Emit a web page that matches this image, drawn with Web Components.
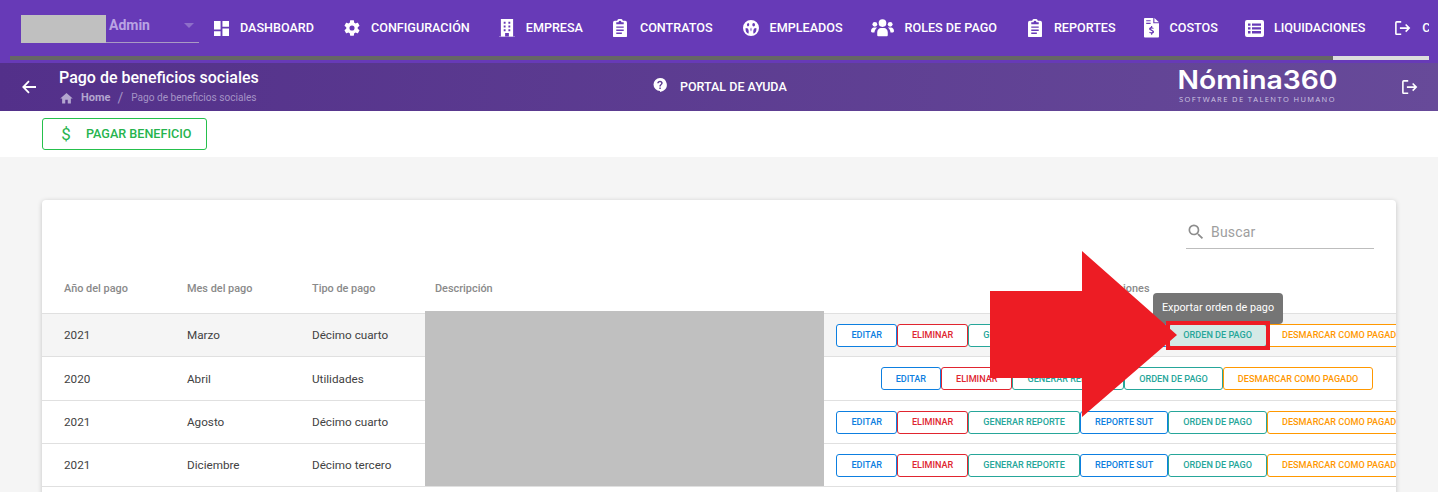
<!DOCTYPE html>
<html lang="es">
<head>
<meta charset="utf-8">
<title>Pago de beneficios sociales</title>
<style>
html,body{margin:0;padding:0;height:492px;overflow:hidden;background:#f5f5f5;font-family:Roboto,"Liberation Sans",sans-serif;}
</style>
</head>
<body>
<app-shell>
  <top-nav>
    <nav-item icon="dashboard" w="16" s="15">DASHBOARD</nav-item>
    <nav-item icon="cog" w="18" s="16" x="1">CONFIGURACIÓN</nav-item>
    <nav-item icon="building" w="17" s="16">EMPRESA</nav-item>
    <nav-item icon="clipboard" w="18" s="14" x="1">CONTRATOS</nav-item>
    <nav-item icon="face" w="18" s="16" x="1" m="28">EMPLEADOS</nav-item>
    <nav-item icon="users" w="24" s="23">ROLES DE PAGO</nav-item>
    <nav-item icon="clipboard" w="18" s="14" x="2" m="27">REPORTES</nav-item>
    <nav-item icon="invoice" w="17" s="15" x="1" m="27">COSTOS</nav-item>
    <nav-item icon="list" w="19" s="19">LIQUIDACIONES</nav-item>
    <nav-item icon="exit" w="18" s="16" x="1">CERRAR SESIÓN</nav-item>
  </top-nav>
  <sub-header heading="Pago de beneficios sociales"></sub-header>
  <action-bar></action-bar>
  <pay-card>
    <pay-row year="2021" month="Marzo" type="Décimo cuarto" sut hover></pay-row>
    <pay-row year="2020" month="Abril" type="Utilidades" h="44"></pay-row>
    <pay-row year="2021" month="Agosto" type="Décimo cuarto" sut></pay-row>
    <pay-row year="2021" month="Diciembre" type="Décimo tercero" sut></pay-row>
  </pay-card>
</app-shell>
<arrow-callout></arrow-callout>

<script>
const ICONS = {
  dashboard:'<svg viewBox="0 0 16 16" fill="#fff"><path d="M0 0h7v9H0zM0 11h7v5H0zM9 0h7v6H9zM9 8h7v8H9z"/></svg>',
  cog:'<svg viewBox="2 2 20 20" fill="#fff"><path d="M19.14 12.94c.04-.3.06-.61.06-.94 0-.32-.02-.64-.07-.94l2.03-1.58c.18-.14.23-.41.12-.61l-1.92-3.32c-.12-.22-.37-.29-.59-.22l-2.39.96c-.5-.38-1.03-.7-1.62-.94l-.36-2.54c-.04-.24-.24-.41-.48-.41h-3.84c-.24 0-.43.17-.47.41l-.36 2.54c-.59.24-1.13.57-1.62.94l-2.39-.96c-.22-.08-.47 0-.59.22L2.74 8.87c-.12.21-.08.47.12.61l2.03 1.58c-.05.3-.09.63-.09.94s.02.64.07.94l-2.03 1.58c-.18.14-.23.41-.12.61l1.92 3.32c.12.22.37.29.59.22l2.39-.96c.5.38 1.03.7 1.62.94l.36 2.54c.05.24.24.41.48.41h3.84c.24 0 .44-.17.47-.41l.36-2.54c.59-.24 1.13-.56 1.62-.94l2.39.96c.22.08.47 0 .59-.22l1.92-3.32c.12-.22.07-.47-.12-.61l-2.01-1.58zM12 15.200a3.200 3.200 0 1 1 0-6.400 3.200 3.200 0 0 1 0 6.400z"/></svg>',
  building:'<svg viewBox="0 0 17 20" fill="#fff"><path fill-rule="evenodd" d="M2 0h13v18.500h-4.500v-3.500h-4v3.500H2zM5 3v2h2V3zm5 0v2h2V3zM5 7v2h2V7zm5 0v2h2V7zM5 11v2h2v-2zm5 0v2h2v-2z"/><rect x="0" y="18.800" width="17" height="1.200"/></svg>',
  clipboard:'<svg viewBox="1.500 0 15 20" fill="#fff"><path fill-rule="evenodd" d="M3.500 2H6a3 2.200 0 0 1 6 0h2.500A2 2 0 0 1 16.500 4v14a2 2 0 0 1-2 2h-11a2 2 0 0 1-2-2V4a2 2 0 0 1 2-2zM5 3.500v2h8v-2h-2.500a1.500 1.500 0 0 0-3 0zM5 8v1.500h8V8zm0 3.300v1.500h8v-1.500zm0 3.300v1.500h6v-1.500z"/></svg>',
  face:'<svg viewBox="0 0 18 18" fill="#fff"><path fill-rule="evenodd" d="M9 0a9 9 0 1 1 0 18A9 9 0 0 1 9 0zM6 3.500a2 2 0 0 0-.6 3.700A2 2 0 0 0 6 3.500zm6 0a2 2 0 0 0 0 3.900 2 2 0 0 0 0-3.900zM3 9c-.5 3 .5 5 3 6.500.8-2 .5-4.500-.5-6zM15 9l-2.500.5c-1 1.500-1.300 4-.5 6 2.500-1.500 3.500-3.500 3-6.500zM9 8.500c-.8 1.500-.8 3 0 4.500.8-1.500.8-3 0-4.500z"/></svg>',
  users:'<svg viewBox="0 0 24 18" fill="#fff"><circle cx="12" cy="4.300" r="4"/><circle cx="4" cy="5.500" r="2.500"/><circle cx="20" cy="5.500" r="2.500"/><path d="M6.500 17v-3.200c0-2.500 2-4.300 3.800-4.300h3.400c1.800 0 3.800 1.800 3.800 4.300V17c0 .6-.4 1-1 1H7.500c-.6 0-1-.4-1-1zM0 12.500C0 10 1.500 8.800 3 8.800h2.200c.5 0 .8.200 1.100.4-1.500 1-2.500 2.700-2.700 4.800H1.200C.5 14 0 13.400 0 12.500zM24 12.500c0-2.500-1.500-3.700-3-3.700h-2.200c-.5 0-.8.200-1.100.4 1.500 1 2.500 2.700 2.700 4.800h2.400c.7 0 1.200-.6 1.200-1.500z"/></svg>',
  invoice:'<svg viewBox="0 0 17 22" fill="#fff"><path fill-rule="evenodd" d="M1 0h9.500v6H17v15a1 1 0 0 1-1 1H1a1 1 0 0 1-1-1V1a1 1 0 0 1 1-1zM2.500 2.500v1.300h5V2.500zm0 3v1.300h5V5.500zM11.800 0 17 4.800h-5.200zM8 9v1.200c-1.300.2-2.200 1-2.200 2.100 0 1.300 1 1.700 2.200 2.100 1.100.3 1.500.5 1.500 1 0 .4-.4.7-1.100.7-.6 0-1.200-.2-1.800-.6l-.7 1.100c.6.400 1.300.7 2.100.8V19h1.300v-1.200c1.300-.2 2.100-1 2.100-2.100 0-1.300-1-1.800-2.200-2.200-1.100-.3-1.500-.5-1.500-.9s.4-.6 1-.6c.5 0 1.100.2 1.600.5l.7-1.100c-.5-.300-1.100-.6-1.700-.7V9z"/></svg>',
  list:'<svg viewBox="0 0 19 17" fill="#fff"><path fill-rule="evenodd" d="M2 0h15a2 2 0 0 1 2 2v13a2 2 0 0 1-2 2H2a2 2 0 0 1-2-2V2a2 2 0 0 1 2-2zM3 3.500v2.300h2.500V3.500zm4 0v2.300h9V3.500zM3 7.300v2.300h2.500V7.300zm4 0v2.300h9V7.300zM3 11.100v2.300h2.500v-2.300zm4 0v2.300h9v-2.300z"/></svg>',
  exit:'<svg viewBox="0 0 18 16" fill="none" stroke="#fff" stroke-width="1.800"><path d="M7 1H2a1 1 0 0 0-1 1v12a1 1 0 0 0 1 1h5"/><path d="M5.500 8H16M12 4l4 4-4 4"/></svg>'
};

function define(name, css, html){
  customElements.define(name, class extends HTMLElement{
    connectedCallback(){
      if(this.shadowRoot) return;
      const r=this.attachShadow({mode:'open'});
      r.innerHTML='<style>'+css+'</style>'+(typeof html==='function'?html(this):html);
    }
  });
}

define('app-shell',':host{display:block;width:1438px;height:492px;overflow:hidden}','<slot></slot>');

define('nav-item',`
:host{display:flex;align-items:center;flex:none;margin-right:29px;color:#fff;font:500 12.600px/16px Roboto,sans-serif;white-space:nowrap}
.i{display:block;margin-right:10px;flex:none}
svg{display:block}
`,el=>{
  if(el.hasAttribute('m')) el.style.marginRight=el.getAttribute('m')+'px';
  return `<span class="i" style="width:${el.getAttribute('w')}px"><span style="display:block;width:${el.getAttribute('s')}px;margin-left:${el.getAttribute('x')||0}px">${ICONS[el.getAttribute('icon')]}</span></span><slot></slot>`;
});

define('top-nav',`
:host{display:block;height:63px;background:#673ab7;padding:0 9px 0 10px;box-sizing:border-box;width:1438px}
.row{height:56px;display:flex;align-items:center;overflow:hidden;width:1419px}
.sel{flex:none;margin-left:11px;margin-right:15px;width:178px;height:28px;margin-top:2px;box-sizing:border-box;border-bottom:1px solid #a99ac4;position:relative;display:flex}
.pic{width:85px;height:28px;background:#c0c0c0;flex:none}
.adm{margin-left:3px;font:700 14px/20px Roboto,sans-serif;color:#b9a3e3;}
.car{position:absolute;right:5px;top:8px;width:0;height:0;border:5px solid transparent;border-top-color:#8e6fc9;}
.bar{height:4px;display:flex;background:#666}
.bar i{display:block;flex:none;margin-left:1323px;width:96px;background:#ddd}
`,`<div class="row"><div class="sel"><div class="pic"></div><span class="adm">Admin</span><span class="car"></span></div><slot></slot></div><div class="bar"><i></i></div>`);

define('sub-header',`
:host{display:flex;align-items:center;height:48px;background:linear-gradient(95deg,#53308a,#674a99);color:#fff;position:relative}
.back{flex:none;margin-left:22px;width:14px;height:14px;margin-right:23px}
.t{flex:none;width:594px}
h1{margin:-2px 0 0;font:500 16px/22px Roboto,sans-serif;white-space:nowrap}
.crumb{display:flex;align-items:center;font:400 10.100px/14px Roboto,sans-serif;color:#a593c6;margin-top:2px;white-space:nowrap}
.crumb svg{width:15px;height:15px;margin-right:7px;flex:none}
.crumb b{font:700 11px/14px Roboto,sans-serif;color:#b3a6cf;}
.crumb span{margin:0 8px 0 7px;font-size:14px}
.help{display:flex;align-items:center;flex:none;font:500 12.500px/16px Roboto,sans-serif;white-space:nowrap;width:524px;margin-top:-1px}
.help svg{width:14px;height:14px;margin-right:13px;margin-top:-4px}
.logo{flex:none;width:161px;text-align:center;white-space:nowrap;margin-top:-3px}
.n{font:600 25.500px/24px Inter,sans-serif;display:block;transform:scaleX(1.11)}
.s{font:400 7.500px/9px "Open Sans",sans-serif;letter-spacing:1.400px;color:#cfc6e2;display:block;margin-top:3px}
.out{flex:none;width:16px;height:15px;margin-left:64px}
.out svg{display:block}
`,el=>`<svg class="back" viewBox="0 0 14 14" fill="none" stroke="#fff" stroke-width="1.800"><path d="M14 7H1.500M7 1.200 1.300 7 7 12.800"/></svg>
<div class="t"><h1>${el.getAttribute('heading')}</h1>
<div class="crumb"><svg viewBox="0 0 24 24" fill="#b3a6cf"><path d="M10 20v-6h4v6h5v-8h3L12 3 2 12h3v8z"/></svg><b>Home</b><span>/</span>${el.getAttribute('heading')}</div></div>
<div class="help"><svg viewBox="0 0 14 14"><path fill="#fff" fill-rule="evenodd" d="M7 0a6.800 6.800 0 0 1 3 12.900L7 14v-1A6.500 6.500 0 0 1 7 0zm-.7 9.500v1.600h1.500V9.500zM7 2.800c-1.600 0-2.700 1-2.800 2.500h1.500c.1-.7.600-1.100 1.300-1.100s1.200.4 1.200 1c0 1.200-1.900 1.300-1.900 3.300h1.500c0-1.400 1.900-1.600 1.900-3.400C9.700 3.800 8.600 2.800 7 2.800z"/></svg>PORTAL DE AYUDA</div>
<div class="logo"><span class="n">Nómina360</span><span class="s">SOFTWARE DE TALENTO HUMANO</span></div>
<div class="out">${ICONS.exit}</div>`);

define('action-bar',`
:host{display:block;height:46px;background:#fff;padding:7px 0 0 42px;box-sizing:border-box}
.b{display:flex;align-items:center;width:165px;height:32px;box-sizing:border-box;border:1px solid #25c04c;border-radius:3px;color:#26b44e;font:500 12.600px/16px Roboto,sans-serif;white-space:nowrap}
.d{font:400 17px/20px Roboto,sans-serif;width:10px;margin:0 15px 0 18px;text-align:center;flex:none}
`,`<div class="b"><span class="d">$</span>PAGAR BENEFICIO</div>`);

define('pay-card',`
:host{display:block;position:relative;margin:43px 0 0 42px;width:1354px;height:400px;background:#fff;border-radius:4px 4px 0 0;box-shadow:0 1px 5px rgba(0,0,0,.2)}
.clip{overflow:hidden;position:relative;height:100%;border-radius:4px 4px 0 0}
.search{height:69px;display:flex;justify-content:flex-end;align-items:flex-start;padding:19px 22px 0 0;box-sizing:border-box}
.f{width:188px;height:30px;border-bottom:1px solid #bdbdbd;display:flex;align-items:center;box-sizing:border-box;color:#9e9e9e;font:400 14px/20px Roboto,sans-serif;padding-bottom:4px;letter-spacing:.2px}
.f svg{width:20px;height:20px;margin-right:5px;flex:none}
.head{display:grid;grid-template-columns:135px 125px 123px 399px 606px;width:1388px;height:45px;padding-bottom:4px;border-bottom:1px solid #e0e0e0;box-sizing:border-box;font:500 10.900px/14px Roboto,sans-serif;color:#8a8a8a;align-items:center}
.head span:first-child{padding-left:22px}.head span{padding-left:10px;white-space:nowrap}.head .a{padding:0;text-align:center}
.mask{position:absolute;left:383px;top:111px;width:399px;height:175px;background:#c0c0c0}
`,`<div class="clip"><div class="search"><div class="f"><svg viewBox="0 0 24 24" fill="#8d8d8d"><path d="M15.500 14h-.79l-.28-.27A6.470 6.470 0 0 0 16 9.500 6.500 6.500 0 1 0 9.500 16c1.610 0 3.090-.59 4.230-1.570l.27.28v.79l5 4.990L20.490 19l-4.990-5zm-6 0C7.010 14 5 11.990 5 9.500S7.010 5 9.500 5 14 7.010 14 9.500 11.990 14 9.500 14z"/></svg>Buscar</div></div>
<div class="head"><span>Año del pago</span><span>Mes del pago</span><span>Tipo de pago</span><span>Descripción</span><span class="a">Acciones</span></div>
<slot></slot><div class="mask"></div></div>`);

define('act-btn',`
:host{display:flex;align-items:center;justify-content:center;flex:none;height:23px;box-sizing:border-box;border:1px solid currentColor;border-radius:3px;background:#fff;font:500 9.100px/12px Roboto,sans-serif;white-space:nowrap;padding:0 14px}
:host([tone=blue]){color:#0d7fe0}
:host([tone=red]){color:#e0252f}
:host([tone=teal]){color:#26a69a}
:host([tone=orange]){color:#ff9800}
:host([lit]){background:#d4e9e6}
`,`<slot></slot>`);

define('pay-row',`
:host{display:grid;grid-template-columns:135px 125px 123px 399px 606px;width:1388px;box-sizing:border-box;border-bottom:1px solid #e0e0e0;align-items:center;font:400 11.700px/16px Roboto,sans-serif;color:#424242}
:host([hover]){background:#f5f5f5}
.c{padding-left:10px;white-space:nowrap}.c.first{padding-left:22px}
.acts{display:flex;justify-content:center}
`,el=>{
  const h=el.getAttribute('h')||43; el.style.height=h+'px';
  const lit=el.hasAttribute('hover')?' lit':'';
  return `<div class="c first">${el.getAttribute('year')}</div><div class="c">${el.getAttribute('month')}</div><div class="c">${el.getAttribute('type')}</div><div class="c"></div>
<div class="acts"><act-btn tone="blue">EDITAR</act-btn><act-btn tone="red">ELIMINAR</act-btn><act-btn tone="teal">GENERAR REPORTE</act-btn>${el.hasAttribute('sut')?'<act-btn tone="blue">REPORTE SUT</act-btn>':''}<act-btn tone="teal"${lit}>ORDEN DE PAGO</act-btn><act-btn tone="orange">DESMARCAR COMO PAGADO</act-btn></div>`;
});

define('arrow-callout',`
:host{display:block;position:absolute;left:0;top:0;width:0;height:0}
.tip{position:absolute;left:1153px;top:293px;width:130px;height:31px;box-sizing:border-box;background:#757575;border-radius:4px;color:#fff;font:400 10.800px/30px Roboto,sans-serif;text-align:center;white-space:nowrap}
.hl{position:absolute;left:1166px;top:321px;width:104px;height:29px;box-sizing:border-box;border:4px solid #ed1c24}
svg{position:absolute;left:0;top:0;width:1438px;height:492px}
`,`<div class="tip">Exportar orden de pago</div><div class="hl"></div>
<svg viewBox="0 0 1438 492"><polygon fill="#ed1c24" points="990,291 1082,291 1082,251 1177,335 1082,417 1082,378 990,378"/></svg>`);
</script>
</body>
</html>
